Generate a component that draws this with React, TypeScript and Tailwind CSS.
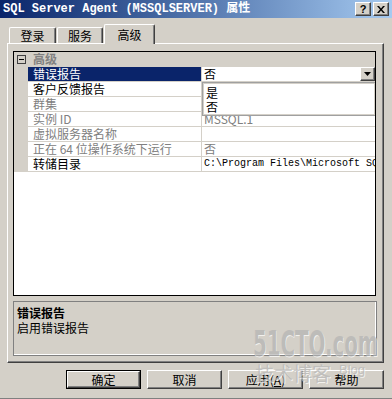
import React from "react";

const CJK = '"Noto Sans CJK SC", "Noto Sans", sans-serif';

type Row = { name: string; value?: string; disabled?: boolean; selected?: boolean; mono?: boolean };

const ROWS: Row[] = [
  { name: "错误报告", value: "否", selected: true },
  { name: "客户反馈报告", value: "" },
  { name: "群集", disabled: true },
  { name: "实例 ID", value: "MSSQL.1", disabled: true },
  { name: "虚拟服务器名称", disabled: true },
  { name: "正在 64 位操作系统下运行", value: "否", disabled: true },
  { name: "转储目录", value: "C:\\Program Files\\Microsoft SQL Server\\MSSQL.1\\MSSQL\\LOG", mono: true },
];

// classic raised 3D edge
const raised =
  "border border-t-white border-l-white border-r-[#404040] border-b-[#404040] shadow-[inset_-1px_-1px_#808080]";

function DialogButton({ children, primary }: { children: React.ReactNode; primary?: boolean }) {
  return (
    <div className={`w-[75px] h-[19px] bg-[#d4d0c8] ${primary ? "border border-black" : ""}`}>
      <div className={`h-full flex items-center justify-center text-[12px] text-black ${raised}`}>{children}</div>
    </div>
  );
}

function Tab({ label, active, className }: { label: string; active?: boolean; className: string }) {
  return (
    <div
      className={`${className} bg-[#d4d0c8] border-t border-l border-r border-t-white border-l-white border-r-[#404040] shadow-[inset_-1px_0_#808080] rounded-t-[2px] flex justify-center text-[12px] text-black ${
        active ? "h-[20px] -mb-px z-10 relative pt-[1px] items-start" : "h-[16px] items-center"
      }`}
    >
      {label}
    </div>
  );
}

export default function App() {
  return (
    <div
      className="relative w-[392px] h-[399px] bg-[#d4d0c8] overflow-hidden flex flex-col border-b border-b-[#808080]"
      style={{ fontFamily: CJK }}
    >
      {/* Title bar */}
      <div className="h-[18px] shrink-0 flex items-center bg-gradient-to-r from-[#0a246a] to-[#a6caf0] pl-[3px]">
        <span
          className="text-white font-bold text-[12px] leading-none whitespace-nowrap"
          style={{ fontFamily: '"Liberation Mono", "Noto Sans CJK SC", monospace' }}
        >
          SQL Server Agent (MSSQLSERVER) 属性
        </span>
        <div className="ml-auto flex gap-[2px] pr-[3px]">
          <div className={`w-[16px] h-[14px] bg-[#d4d0c8] flex items-center justify-center text-[11px] font-bold leading-none text-black ${raised}`} style={{ fontFamily: '"Liberation Sans", sans-serif' }}>
            ?
          </div>
          <div className={`w-[16px] h-[14px] bg-[#d4d0c8] flex items-center justify-center ${raised}`}>
            <svg width="8" height="7" viewBox="0 0 8 7">
              <path d="M0 0h2l2 2.5L6 0h2L5 3.5 8 7H6L4 4.5 2 7H0l3-3.5z" fill="#000" />
            </svg>
          </div>
        </div>
      </div>

      {/* Tabs */}
      <div className="h-[25px] shrink-0 flex items-end">
        <Tab label="登录" className="ml-[9px] w-[47px]" />
        <Tab label="服务" className="ml-[1px] w-[46px]" />
        <Tab label="高级" active className="ml-[1px] w-[51px]" />
      </div>

      {/* Tab panel */}
      <div className="ml-[7px] w-[377px] h-[320px] shrink-0 border border-t-white border-l-white border-r-[#404040] border-b-[#404040] shadow-[inset_-1px_-1px_#808080] flex flex-col">
        {/* Property grid */}
        <div className="mt-[7px] ml-[5px] w-[363px] h-[245px] border border-black bg-white relative overflow-hidden text-[12px] leading-none">
          {/* category row */}
          <div className="h-[15px] flex items-center bg-[#d4d0c8] border-b border-b-[#d4d0c8]">
            <div className="w-[14px] flex justify-center">
              <div className="w-[9px] h-[9px] border border-[#404040] bg-[#d4d0c8] flex items-center justify-center">
                <div className="w-[5px] h-px bg-black" />
              </div>
            </div>
            <span className="pl-[5px] font-bold text-[#808080]">高级</span>
          </div>

          {ROWS.map((r) => (
            <div key={r.name} className="h-[15px] flex border-b border-b-[#d4d0c8]">
              <div className="w-[14px] bg-[#d4d0c8]" />
              <div
                className={`w-[174px] border-r border-r-[#d4d0c8] pl-[5px] flex items-center whitespace-nowrap ${
                  r.selected ? "bg-[#0a246a] text-white" : r.disabled ? "text-[#808080]" : "text-black"
                }`}
              >
                {r.name}
              </div>
              <div className={`flex-1 flex items-center pl-[2px] overflow-hidden whitespace-nowrap ${r.disabled ? "text-[#808080]" : "text-black"}`}>
                <span
                  className={r.mono ? "text-[10px]" : ""}
                  style={r.mono ? { fontFamily: '"Liberation Mono", monospace' } : undefined}
                >
                  {r.value}
                </span>
                {r.selected && (
                  <div className={`ml-auto w-[15px] h-[14px] bg-[#d4d0c8] flex items-center justify-center ${raised}`}>
                    <svg width="7" height="4" viewBox="0 0 7 4">
                      <path d="M0 0h7L3.5 4z" fill="#000" />
                    </svg>
                  </div>
                )}
              </div>
            </div>
          ))}

          {/* open dropdown list */}
          <div className="absolute left-[188px] top-[30px] w-[174px] h-[34px] bg-white border border-[#a0a0a0] shadow-[inset_1px_1px_#d4d0c8,inset_-1px_-1px_#d4d0c8] flex flex-col pl-[3px] pt-[3px] text-black">
            <div className="h-[14px] flex items-center">是</div>
            <div className="h-[14px] flex items-center">否</div>
          </div>
        </div>

        {/* Description pane */}
        <div className="mt-[5px] ml-[5px] w-[364px] h-[55px] border border-[#808080] shadow-[inset_-1px_-1px_white] px-[3px] pt-[3px] text-[12px] leading-[15px] text-black">
          <div className="font-bold">错误报告</div>
          <div>启用错误报告</div>
        </div>
      </div>

      {/* Buttons */}
      <div className="mt-[7px] ml-[66px] flex gap-[6px]">
        <DialogButton primary>确定</DialogButton>
        <DialogButton>取消</DialogButton>
        <DialogButton>
          应用(<span className="underline">A</span>)
        </DialogButton>
        <DialogButton>帮助</DialogButton>
      </div>

      {/* watermark overlay */}
      <div className="absolute left-[253px] top-[326px] pointer-events-none select-none opacity-70">
        <div
          className="text-[36px] font-bold leading-none text-[#b4b4b4] [text-shadow:1px_1px_0_#ffffff] whitespace-nowrap"
          style={{ fontFamily: '"DejaVu Sans", sans-serif', transform: "scaleX(0.55)", transformOrigin: "left" }}
        >
          51CTO.com
        </div>
      </div>
      <div className="absolute left-[255px] top-[363px] pointer-events-none select-none opacity-70 flex items-start gap-[8px]">
        <span className="text-[19px] leading-none text-[#b8b8b8] [text-shadow:1px_1px_0_#ffffff]">技术博客</span>
        <span className="text-[13px] leading-none text-[#b8b8b8] [text-shadow:1px_1px_0_#ffffff]" style={{ fontFamily: '"Liberation Sans", sans-serif' }}>
          Blog
        </span>
      </div>
    </div>
  );
}
